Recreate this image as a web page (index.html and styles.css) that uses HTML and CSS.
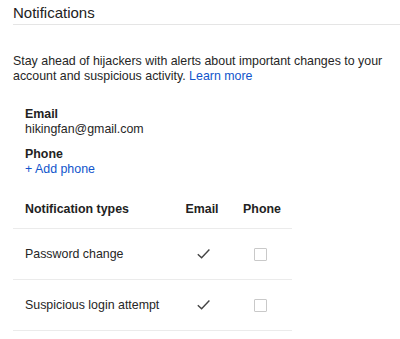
FILE: index.html
```html
<!DOCTYPE html>
<html lang="en">
<head>
    <meta charset="UTF-8">
    <title>Notifications</title>
    <link rel="stylesheet" href="styles.css">
</head>
<body>
    <!-- section header -->
    <h2 class="title">Notifications</h2>

    <p class="intro">Stay ahead of hijackers with alerts about important changes to your account and suspicious activity. <a href="#">Learn more</a></p>

    <div class="contact">
        <div class="contact-item">
            <div class="label">Email</div>
            <div>hikingfan@gmail.com</div>
        </div>
        <div class="contact-item">
            <div class="label">Phone</div>
            <a href="#">+ Add phone</a>
        </div>
    </div>

    <!-- notification types table -->
    <div class="types">
        <div class="row head">
            <div class="name">Notification types</div>
            <div class="cell">Email</div>
            <div class="cell">Phone</div>
        </div>
        <div class="row">
            <div class="name">Password change</div>
            <div class="cell">
                <svg class="check" width="13" height="10" viewBox="0 0 13 10"><path d="M0.8 5.2 L4.6 8.8 L12.4 0.6" fill="none" stroke="#444" stroke-width="1.4"/></svg>
            </div>
            <div class="cell"><span class="box"></span></div>
        </div>
        <div class="row">
            <div class="name">Suspicious login attempt</div>
            <div class="cell">
                <svg class="check" width="13" height="10" viewBox="0 0 13 10"><path d="M0.8 5.2 L4.6 8.8 L12.4 0.6" fill="none" stroke="#444" stroke-width="1.4"/></svg>
            </div>
            <div class="cell"><span class="box"></span></div>
        </div>
    </div>
</body>
</html>
```

FILE: styles.css
```css
body {
    margin: 0;
    font-family: "Liberation Sans", Arial, sans-serif;
    font-size: 12.4px;
    line-height: 15px;
    color: #262626;
    background: #fff;
}

a {
    color: #15c;
    text-decoration: none;
}

.title {
    margin: 0 0 0 13px;
    padding-top: 3px;
    height: 21px;
    font-size: 15px;
    line-height: 20px;
    font-weight: normal;
    color: #222;
    border-bottom: 1px solid #e5e5e5;
}

.intro {
    margin: 29px 0 0 13px;
    max-width: 380px;
}

.contact {
    margin-top: 23px;
    padding-left: 25px;
    display: flex;
    flex-direction: column;
    gap: 10px;
}

.label {
    font-weight: bold;
    color: #222;
}

.types {
    margin: 14px 0 0 13px;
    width: 279px;
}

.row {
    display: grid;
    grid-template-columns: 159px 60px 60px;
    align-items: center;
    height: 50px;
    border-bottom: 1px solid #ebebeb;
}

.row.head {
    height: 37px;
    font-weight: bold;
    color: #222;
}

.name {
    padding-left: 12px;
}

.cell {
    display: flex;
    justify-content: center;
}

.check {
    display: block;
    margin-left: 2px;
}

.box {
    display: block;
    width: 11px;
    height: 11px;
    border: 1px solid #c9c9c9;
    border-radius: 1px;
    margin-left: -3px;
}
```
